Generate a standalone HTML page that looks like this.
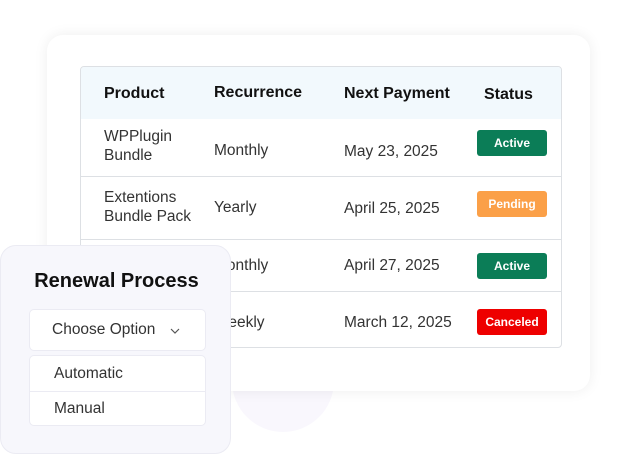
<!DOCTYPE html>
<html><head><style>
*{margin:0;padding:0;box-sizing:border-box}
body{width:625px;height:455px;background:#fff;position:relative;overflow:hidden;font-family:"Liberation Sans",sans-serif;color:#333}
.card{position:absolute;left:47px;top:35px;width:543px;height:356px;background:#fff;border-radius:16px;box-shadow:0 0 14px rgba(0,0,0,.07)}
.circle{position:absolute;left:232px;top:330px;width:102px;height:102px;border-radius:50%;background:#f9f7fd}
.tbl{position:absolute;left:80px;top:66px;width:482px;height:282px;border:1px solid #dde0e4;border-radius:4px;overflow:hidden;background:#fff}
.hdr{position:absolute;left:0;top:0;width:100%;height:52px;background:#f2f9fd}
.t{position:absolute;white-space:nowrap}
.h{font-weight:600;font-size:16px;color:#111}
.b{font-size:15.5px;color:#333;line-height:19px}
.line{position:absolute;left:0;width:100%;height:1px;background:#dde0e4}
.badge{position:absolute;left:396px;width:70px;height:26px;border-radius:3px;color:#fff;font-size:12px;font-weight:700;text-align:center;line-height:26px}
.pop{position:absolute;left:0;top:245px;width:231px;height:209px;background:#f7f7fc;border:1px solid #ebebf3;border-radius:16px}
.box{position:absolute;left:28px;width:177px;background:#fff;border:1px solid #ebebf3;border-radius:5px}
</style></head><body>
<div class="circle"></div>
<div class="card"></div>
<div class="tbl">
 <div class="hdr"></div>
 <div class="t h" style="left:23px;top:18px">Product</div>
 <div class="t h" style="left:133px;top:17px">Recurrence</div>
 <div class="t h" style="left:263px;top:18px">Next Payment</div>
 <div class="t h" style="left:403px;top:19px">Status</div>
 <div class="line" style="top:109px"></div>
 <div class="line" style="top:172px"></div>
 <div class="line" style="top:224px"></div>
 <div class="t b" style="left:23px;top:60px">WPPlugin<br>Bundle</div>
 <div class="t b" style="left:133px;top:74px">Monthly</div>
 <div class="t b" style="left:263px;top:75px">May 23, 2025</div>
 <div class="badge" style="top:63px;background:#0b7d57">Active</div>
 <div class="t b" style="left:23px;top:121px">Extentions<br>Bundle Pack</div>
 <div class="t b" style="left:133px;top:131px">Yearly</div>
 <div class="t b" style="left:263px;top:132px">April 25, 2025</div>
 <div class="badge" style="top:124px;background:#fba048">Pending</div>
 <div class="t b" style="left:133px;top:189px">Monthly</div>
 <div class="t b" style="left:263px;top:189px">April 27, 2025</div>
 <div class="badge" style="top:186px;background:#0b7d57">Active</div>
 <div class="t b" style="left:133px;top:246px">Weekly</div>
 <div class="t b" style="left:263px;top:246px">March 12, 2025</div>
 <div class="badge" style="top:242px;background:#ee0000">Canceled</div>
</div>
<div class="pop">
 <div class="t" style="left:0;width:231px;text-align:center;top:24px;font-size:20px;font-weight:600;color:#111">Renewal Process</div>
 <div class="box" style="top:63px;height:42px">
  <div class="t" style="left:22px;top:11px;font-size:15.5px;color:#333">Choose Option</div>
  <svg style="position:absolute;left:140px;top:18px" width="10" height="6" viewBox="0 0 10 6"><path d="M1 1l4 4 4-4" fill="none" stroke="#555" stroke-width="1.2"/></svg>
 </div>
 <div class="box" style="top:109px;height:71px">
  <div class="t" style="left:24px;top:9px;font-size:15.5px;color:#333">Automatic</div>
  <div style="position:absolute;left:0;top:35px;width:100%;height:1px;background:#ebebf3"></div>
  <div class="t" style="left:24px;top:44px;font-size:15.5px;color:#333">Manual</div>
 </div>
</div>
</body></html>
